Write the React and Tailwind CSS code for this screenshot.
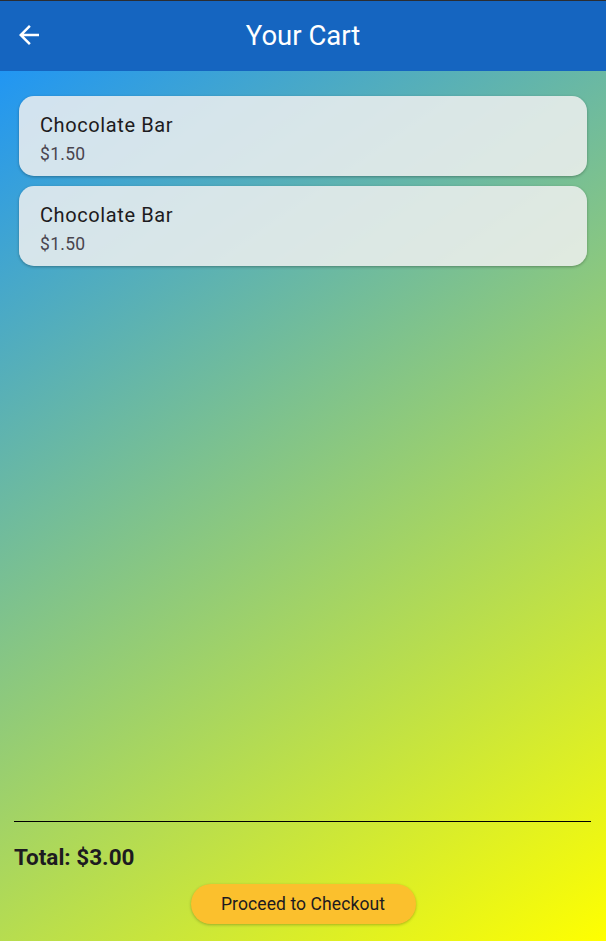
import React from "react";

const items = [
  { name: "Chocolate Bar", price: "$1.50" },
  { name: "Chocolate Bar", price: "$1.50" },
];

export default function App() {
  return (
    <div className="flex min-h-[941px] w-full flex-col font-['Roboto',sans-serif]">
      <header className="relative flex h-[71px] shrink-0 items-center justify-center border-t border-[#2b2d31] bg-[#1565c0]">
        <button className="absolute left-[14px] top-[19px] h-[30px] w-[30px]" aria-label="Back">
          <svg viewBox="0 0 24 24" width="30" height="30" fill="#ffffff">
            <path d="M20 11H7.83l5.59-5.59L12 4l-8 8 8 8 1.41-1.41L7.83 13H20v-2z" />
          </svg>
        </button>
        <h1 className="text-[27.5px] leading-[34px] font-normal text-white">Your Cart</h1>
      </header>
      <main className="flex flex-1 flex-col bg-[linear-gradient(145deg,#2196f3,#ffff00)]">
        <div className="flex flex-col gap-[10px] px-[19px] pt-[25px]">
          {items.map((it, i) => (
            <div
              key={i}
              className="h-[80px] rounded-[15px] bg-[rgba(240,240,240,0.85)] pl-[21px] pt-[15px] shadow-[0_1px_3px_rgba(0,0,0,0.3)]"
            >
              <div className="text-[20px] leading-[28px] tracking-[0.6px] text-[#1d1b20]">{it.name}</div>
              <div className="mt-[3px] text-[17.5px] leading-[24px] tracking-[0.3px] text-[#49454f]">{it.price}</div>
            </div>
          ))}
        </div>
        <div className="flex-1" />
        <div className="flex flex-col px-[14px] pb-[17px]">
          <div className="h-px w-[577px] bg-black" />
          <div className="mt-[20px] text-[22.5px] leading-[30px] font-bold text-[#1d1b20]">Total: $3.00</div>
          <div className="mt-[12px] flex justify-center">
            <button className="h-[40px] w-[225px] rounded-full bg-[#fbc02d] text-[17.5px] font-normal tracking-[0.1px] text-[#1d1b20] shadow-[0_1px_3px_rgba(0,0,0,0.25)]">
              Proceed to Checkout
            </button>
          </div>
        </div>
      </main>
    </div>
  );
}
